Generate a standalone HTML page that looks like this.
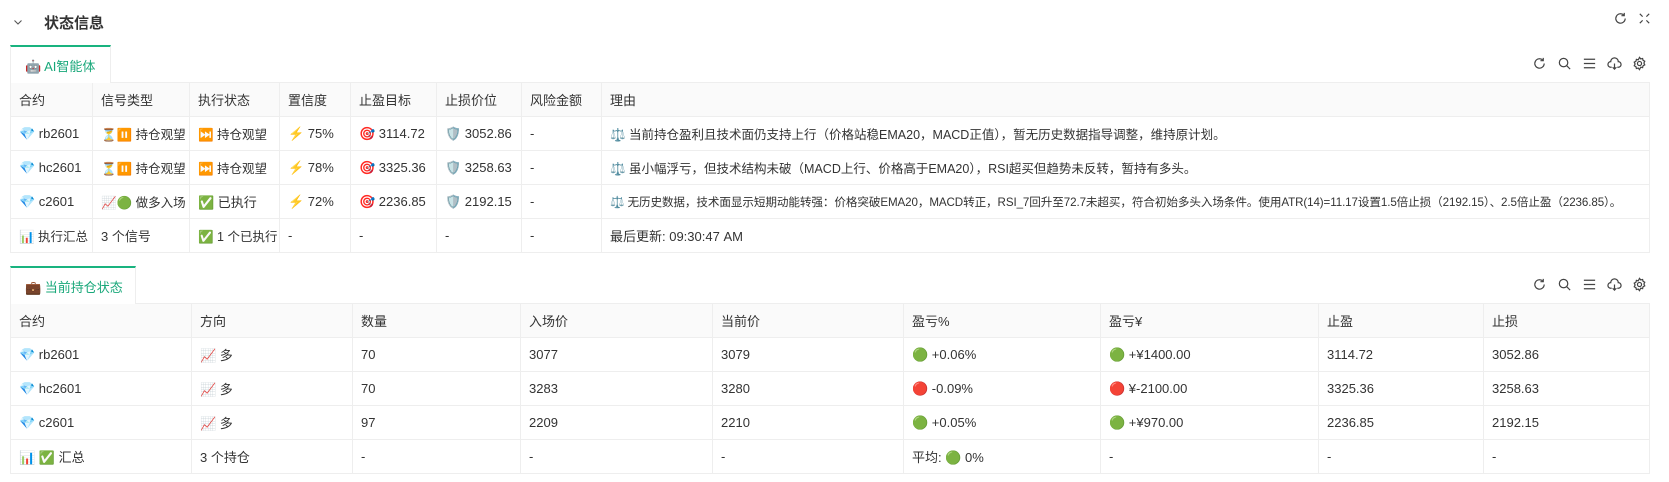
<!DOCTYPE html>
<html><head><meta charset="utf-8"><style>
*{box-sizing:border-box;margin:0;padding:0}
body{width:1669px;height:482px;background:#fff;font-family:"Liberation Sans","Noto Sans CJK SC",sans-serif;color:#333;font-size:13px;position:relative;overflow:hidden}
.title{position:absolute;left:12px;top:10px;height:24px;display:flex;align-items:center;font-size:15px;font-weight:600;color:#333}
.title .chev{width:16px;margin-right:16px;display:flex}
.tab{position:absolute;left:10px;height:38px;border:1px solid #eee;border-top:2px solid #19b37f;border-bottom:none;color:#19a87a;font-size:13px;display:flex;align-items:center;padding-left:14px;background:#fff;z-index:2}
table{position:absolute;left:10px;width:1640px;border-collapse:collapse;table-layout:fixed}
td,th{border:1px solid #eee;padding:0 0 0 8px;text-align:left;font-weight:normal;white-space:nowrap;overflow:hidden;height:34px}
th{background:#fafafa;color:#333}
.icons{position:absolute;display:flex;gap:10px;color:#444}
.ic{width:15px;height:15px}
</style></head><body>
<div class="title"><span class="chev"><svg width="12" height="12" viewBox="0 0 12 12" fill="none" stroke="#555" stroke-width="1.1"><path d="M2.5 4.5L6 8l3.5-3.5"/></svg></span>状态信息</div>
<div class="icons" style="left:1613px;top:11px;gap:9px">
<svg class="ic" viewBox="0 0 16 16" fill="none" stroke="#444" stroke-width="1.3"><path d="M13 8a5 5 0 1 1-1.5-3.6M12 2v3h-3"/></svg>
<svg class="ic" viewBox="0 0 16 16" fill="none" stroke="#444" stroke-width="1.3"><path d="M3 3l3 3M13 3l-3 3M3 13l3-3M13 13l-3-3"/></svg>
</div>

<div class="tab" style="top:45px;width:101px">🤖 AI智能体</div>
<div class="icons" style="left:1532px;top:56px">
<svg class="ic" viewBox="0 0 16 16" fill="none" stroke="#444" stroke-width="1.3"><path d="M13 8a5 5 0 1 1-1.5-3.6M12 2v3h-3"/></svg>
<svg class="ic" viewBox="0 0 16 16" fill="none" stroke="#444" stroke-width="1.3"><circle cx="7" cy="7" r="4.5"/><path d="M10.5 10.5l3.5 3.5"/></svg>
<svg class="ic" viewBox="0 0 16 16" fill="none" stroke="#444" stroke-width="1.3"><path d="M2 3.5h12M2 8h12M2 12.5h12"/></svg>
<svg class="ic" viewBox="0 0 16 16" fill="none" stroke="#444" stroke-width="1.3"><path d="M5 12H4a3 3 0 0 1 0-6 4 4 0 0 1 8 0 3 3 0 0 1 0 6h-1M8 8v6M6 12l2 2 2-2"/></svg>
<svg class="ic" viewBox="0 0 16 16" fill="none" stroke="#444" stroke-width="1.3"><circle cx="8" cy="8" r="2.2"/><path d="M8 1.5l1.3 1.6 2-.5.5 2 1.8 1-.9 1.9.9 1.9-1.8 1-.5 2-2-.5L8 14.5l-1.3-1.6-2 .5-.5-2-1.8-1 .9-1.9-.9-1.9 1.8-1 .5-2 2 .5z"/></svg>
</div>
<table style="top:82px">
<colgroup><col style="width:82px"><col style="width:97px"><col style="width:90px"><col style="width:71px"><col style="width:86px"><col style="width:85px"><col style="width:80px"><col></colgroup>
<tr><th>合约</th><th>信号类型</th><th>执行状态</th><th>置信度</th><th>止盈目标</th><th>止损价位</th><th>风险金额</th><th>理由</th></tr>
<tr><td>💎 rb2601</td><td style="font-size:12.5px">⏳⏸️ 持仓观望</td><td style="font-size:12.5px">⏭️ 持仓观望</td><td>⚡ 75%</td><td>🎯 3114.72</td><td>🛡️ 3052.86</td><td>-</td><td style="font-size:12.5px">⚖️ 当前持仓盈利且技术面仍支持上行（价格站稳EMA20，MACD正值），暂无历史数据指导调整，维持原计划。</td></tr>
<tr><td>💎 hc2601</td><td style="font-size:12.5px">⏳⏸️ 持仓观望</td><td style="font-size:12.5px">⏭️ 持仓观望</td><td>⚡ 78%</td><td>🎯 3325.36</td><td>🛡️ 3258.63</td><td>-</td><td style="font-size:12.5px">⚖️ 虽小幅浮亏，但技术结构未破（MACD上行、价格高于EMA20），RSI超买但趋势未反转，暂持有多头。</td></tr>
<tr><td>💎 c2601</td><td style="font-size:12.5px">📈🟢 做多入场</td><td>✅ 已执行</td><td>⚡ 72%</td><td>🎯 2236.85</td><td>🛡️ 2192.15</td><td>-</td><td style="font-size:11.6px;letter-spacing:-0.1px">⚖️ 无历史数据，技术面显示短期动能转强：价格突破EMA20，MACD转正，RSI_7回升至72.7未超买，符合初始多头入场条件。使用ATR(14)=11.17设置1.5倍止损（2192.15）、2.5倍止盈（2236.85）。</td></tr>
<tr><td style="font-size:12.5px">📊 执行汇总</td><td>3 个信号</td><td style="font-size:12.5px">✅ 1 个已执行</td><td>-</td><td>-</td><td>-</td><td>-</td><td>最后更新: 09:30:47 AM</td></tr>
</table>

<div class="tab" style="top:266px;width:126px">💼 当前持仓状态</div>
<div class="icons" style="left:1532px;top:277px">
<svg class="ic" viewBox="0 0 16 16" fill="none" stroke="#444" stroke-width="1.3"><path d="M13 8a5 5 0 1 1-1.5-3.6M12 2v3h-3"/></svg>
<svg class="ic" viewBox="0 0 16 16" fill="none" stroke="#444" stroke-width="1.3"><circle cx="7" cy="7" r="4.5"/><path d="M10.5 10.5l3.5 3.5"/></svg>
<svg class="ic" viewBox="0 0 16 16" fill="none" stroke="#444" stroke-width="1.3"><path d="M2 3.5h12M2 8h12M2 12.5h12"/></svg>
<svg class="ic" viewBox="0 0 16 16" fill="none" stroke="#444" stroke-width="1.3"><path d="M5 12H4a3 3 0 0 1 0-6 4 4 0 0 1 8 0 3 3 0 0 1 0 6h-1M8 8v6M6 12l2 2 2-2"/></svg>
<svg class="ic" viewBox="0 0 16 16" fill="none" stroke="#444" stroke-width="1.3"><circle cx="8" cy="8" r="2.2"/><path d="M8 1.5l1.3 1.6 2-.5.5 2 1.8 1-.9 1.9.9 1.9-1.8 1-.5 2-2-.5L8 14.5l-1.3-1.6-2 .5-.5-2-1.8-1 .9-1.9-.9-1.9 1.8-1 .5-2 2 .5z"/></svg>
</div>
<table style="top:303px">
<colgroup><col style="width:181px"><col style="width:161px"><col style="width:168px"><col style="width:192px"><col style="width:191px"><col style="width:197px"><col style="width:218px"><col style="width:165px"><col></colgroup>
<tr><th>合约</th><th>方向</th><th>数量</th><th>入场价</th><th>当前价</th><th>盈亏%</th><th>盈亏¥</th><th>止盈</th><th>止损</th></tr>
<tr><td>💎 rb2601</td><td>📈 多</td><td>70</td><td>3077</td><td>3079</td><td>🟢 +0.06%</td><td>🟢 +¥1400.00</td><td>3114.72</td><td>3052.86</td></tr>
<tr><td>💎 hc2601</td><td>📈 多</td><td>70</td><td>3283</td><td>3280</td><td>🔴 -0.09%</td><td>🔴 ¥-2100.00</td><td>3325.36</td><td>3258.63</td></tr>
<tr><td>💎 c2601</td><td>📈 多</td><td>97</td><td>2209</td><td>2210</td><td>🟢 +0.05%</td><td>🟢 +¥970.00</td><td>2236.85</td><td>2192.15</td></tr>
<tr><td>📊 ✅ 汇总</td><td>3 个持仓</td><td>-</td><td>-</td><td>-</td><td>平均: 🟢 0%</td><td>-</td><td>-</td><td>-</td></tr>
</table>
</body></html>
